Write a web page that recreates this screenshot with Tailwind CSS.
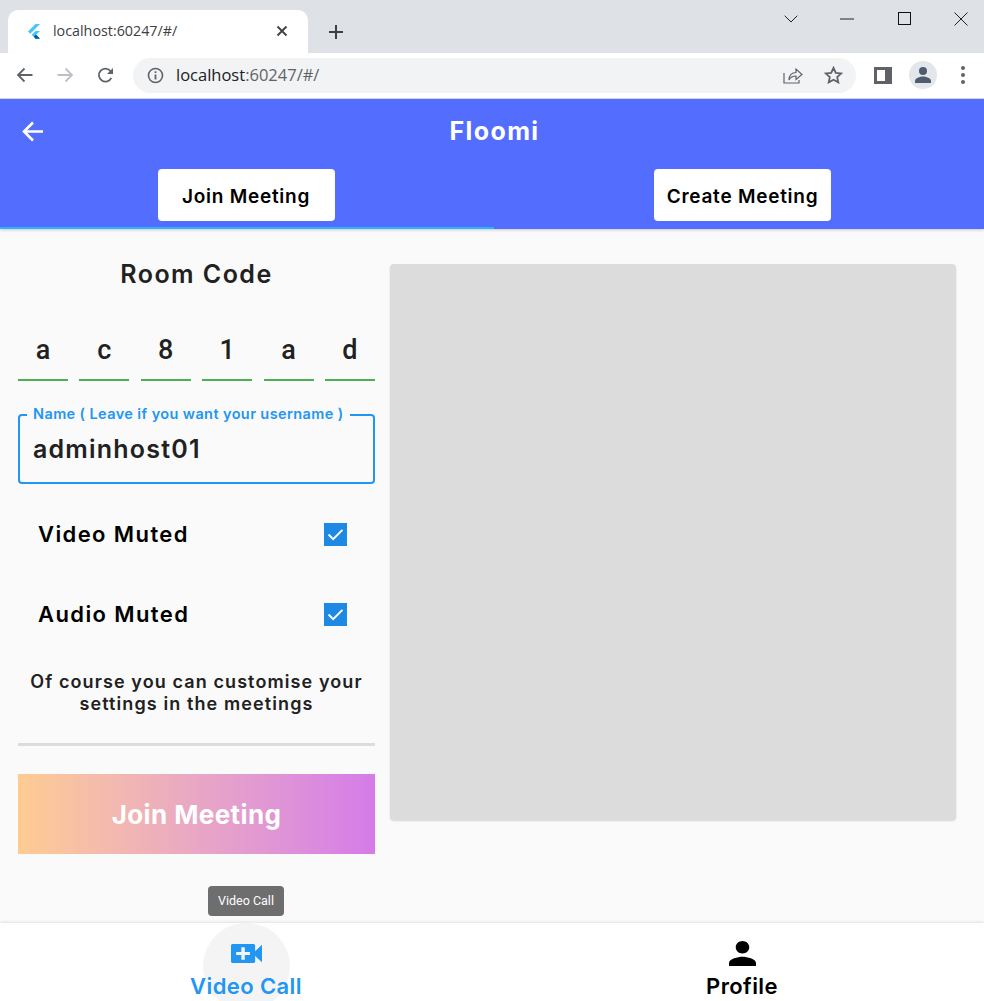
<!DOCTYPE html>
<html lang="en">
<head>
    <meta charset="UTF-8">
    <meta name="viewport" content="width=device-width, initial-scale=1.0">
    <title>Floomi</title>
    <script src="https://cdn.jsdelivr.net/npm/@tailwindcss/browser@4"></script>
</head>
<body class="m-0 bg-[#fafafa] font-['Inter',sans-serif]">
<div class="relative w-[984px] h-[1001px] overflow-hidden flex flex-col">

    <!-- Browser tab strip -->
    <div class="h-[53px] shrink-0 bg-[#dee1e6] flex items-end pl-2">
        <div class="w-[300px] h-[43px] bg-white rounded-t-[10px] flex items-center pl-[18px] pr-[20px] pb-[1px]">
            <svg class="w-4 h-4 shrink-0" viewBox="0 0 16 16"><path fill="#47c5fb" d="M9.5 1 2 8.5l2.3 2.3L14 1z"/><path fill="#47c5fb" d="M9.5 7.9 5.6 11.8 9.5 15.7H14l-3.9-3.9L14 7.9z"/><path fill="#00569e" d="M7.9 13.4 9.9 11.6 14 15.7H9.5z"/></svg>
            <span class="ml-[11px] text-[14.3px] text-[#3c4043] font-['Open_Sans',sans-serif]">localhost:60247/#/</span>
            <svg class="ml-auto w-3 h-3" viewBox="0 0 12 12"><path d="M1.5 1.5l9 9M10.5 1.5l-9 9" stroke="#3c4043" stroke-width="1.8" fill="none"/></svg>
        </div>
        <svg class="ml-[20px] mb-[13px] w-4 h-4" viewBox="0 0 16 16"><path d="M8 1v14M1 8h14" stroke="#3c4043" stroke-width="2" fill="none"/></svg>
        <div class="ml-auto self-start flex items-center h-[37px]">
            <svg class="w-[14px] h-2" viewBox="0 0 14 8"><path d="M.7.7 7 7l6.3-6.3" stroke="#222" fill="none"/></svg>
            <svg class="ml-[42px] w-[14px] h-[2px]" viewBox="0 0 14 2"><path d="M0 1h14" stroke="#222"/></svg>
            <div class="ml-[44px] w-[13px] h-[13px] border border-[#111]"></div>
            <svg class="ml-[43px] mr-[16px] w-[14px] h-[14px]" viewBox="0 0 14 14"><path d="M.5.5l13 13M13.5.5l-13 13" stroke="#222" fill="none"/></svg>
        </div>
    </div>

    <!-- Browser toolbar -->
    <div class="h-[46px] shrink-0 bg-white border-b border-[#dadce0] flex items-center pb-[1px]">
        <svg class="ml-[16px] w-[17px] h-[16px]" viewBox="0 0 17 16"><path d="M16.5 8H2M8.500 1.500 2 8l6.500 6.500" stroke="#5f6368" stroke-width="1.800" fill="none"/></svg>
        <svg class="ml-[24px] w-[17px] h-[16px]" viewBox="0 0 17 16"><path d="M.5 8H15M8.500 1.500 15 8l-6.500 6.500" stroke="#bdc1c6" stroke-width="1.800" fill="none"/></svg>
        <svg class="ml-[23px] w-[17px] h-[17px]" viewBox="0 0 17 17"><path d="M14.300 10.800A6.500 6.500 0 1 1 13.300 3.800L15 5.500" stroke="#5f6368" stroke-width="1.800" fill="none"/><path d="M16 1v6h-6z" fill="#5f6368"/></svg>
        <div class="ml-[19px] w-[723px] h-[35px] rounded-full bg-[#f1f3f4] flex items-center pl-[14px] pr-[14px]">
            <svg class="w-[17px] h-[17px]" viewBox="0 0 17 17"><circle cx="8.500" cy="8.500" r="7" stroke="#5f6368" stroke-width="1.600" fill="none"/><path d="M8.500 7.500v5M8.500 4.300v1.800" stroke="#5f6368" stroke-width="1.800"/></svg>
            <span class="ml-[12px] text-[16.5px] text-[#5f6368] font-['Open_Sans',sans-serif]"><span class="text-[#202124]">localhost</span>:60247/#/</span>
            <svg class="ml-auto mr-[21px] w-[20px] h-[18px]" viewBox="0 0 20 18"><path d="M1 7v10h15v-3" stroke="#5f6368" stroke-width="1.200" fill="none"/><path d="M6 14c0-5 3-7.500 7-7.500V3l6 5.500-6 5V10c-3 0-5.500 1-7 4z" stroke="#5f6368" stroke-width="1.200" fill="none"/></svg>
            <svg class="mr-[-1px] w-[19px] h-[18px]" viewBox="0 0 19 18"><path d="M9.500 1.800l2.300 5 5.400.6-4 3.700 1.100 5.300-4.800-2.700-4.800 2.700 1.100-5.300-4-3.700 5.400-.6z" stroke="#5f6368" stroke-width="1.800" fill="none"/></svg>
        </div>
        <div class="ml-[18px] w-[18px] h-[17px] border-[3px] border-r-[7px] border-[#5f6368]"></div>
        <div class="ml-[17px] w-[28px] h-[28px] rounded-full bg-[#e3e6ea] flex items-center justify-center">
            <svg class="w-[18px] h-[18px]" viewBox="0 0 18 18"><circle cx="9" cy="5" r="4" fill="#4f5b6e"/><path d="M1 17v-2c0-3 5-4.500 8-4.500s8 1.500 8 4.500v2z" fill="#4f5b6e"/></svg>
        </div>
        <div class="ml-[24px] flex flex-col gap-[3px]">
            <span class="w-1 h-1 rounded-full bg-[#5f6368]"></span>
            <span class="w-1 h-1 rounded-full bg-[#5f6368]"></span>
            <span class="w-1 h-1 rounded-full bg-[#5f6368]"></span>
        </div>
    </div>

    <!-- App bar -->
    <header class="relative h-[130px] shrink-0 bg-[#536dfe] shadow-[0_1px_3px_rgba(0,0,0,0.2)] z-10">
        <div class="relative h-[66px] flex items-center justify-center pl-[5px]">
            <svg class="absolute left-[22px] top-[22px] w-[21px] h-[21px]" viewBox="0 0 21 21"><path d="M21 10.500H2.500M11 1.500l-9 9 9 9" stroke="#fff" stroke-width="2.600" fill="none"/></svg>
            <h1 class="text-[25px] font-bold text-white tracking-[1.4px]">Floomi</h1>
        </div>
        <div class="flex h-[64px]">
            <div class="w-[494px] pr-[2px] flex justify-center border-b-[2px] border-[#29b6f6]">
                <button class="mt-[4px] w-[177px] h-[52px] pt-[4px] bg-white rounded-[4px] text-[19px] font-semibold text-black tracking-[0.75px]">Join Meeting</button>
            </div>
            <div class="w-[490px] pl-[7px] flex justify-center">
                <button class="mt-[4px] w-[177px] h-[52px] pt-[4px] bg-white rounded-[4px] text-[19px] font-semibold text-black tracking-[0.75px] whitespace-nowrap">Create Meeting</button>
            </div>
        </div>
    </header>

    <!-- Page body -->
    <main class="flex-1 flex pl-[18px] min-h-0">
        <section class="w-[357px] shrink-0 flex flex-col">
            <h2 class="mt-[29px] h-[32px] leading-[32px] text-center text-[25px] font-semibold text-[#212121] tracking-[1.45px]">Room Code</h2>

            <div class="mt-[26px] flex justify-between font-['Roboto',sans-serif] text-[27px] font-medium text-[#212121] text-center">
                <div class="w-[50px] h-[65px] leading-[68px] border-b-[2px] border-[#4caf50]">a</div>
                <div class="w-[50px] h-[65px] leading-[68px] border-b-[2px] border-[#4caf50]">c</div>
                <div class="w-[50px] h-[65px] leading-[68px] border-b-[2px] border-[#4caf50]">8</div>
                <div class="w-[50px] h-[65px] leading-[68px] border-b-[2px] border-[#4caf50]">1</div>
                <div class="w-[50px] h-[65px] leading-[68px] border-b-[2px] border-[#4caf50]">a</div>
                <div class="w-[50px] h-[65px] leading-[68px] border-b-[2px] border-[#4caf50]">d</div>
            </div>

            <div class="relative mt-[33px] h-[70px] border-2 border-[#2196f3] rounded-[4px] pl-[13px] flex items-center">
                <span class="absolute left-[7px] top-[-11px] px-[6px] bg-[#fafafa] text-[14.5px] leading-[17px] font-semibold text-[#2196f3] tracking-[0.4px] whitespace-nowrap">Name ( Leave if you want your username )</span>
                <span class="text-[25px] font-semibold text-[#212121] tracking-[1.2px] pt-[1px]">adminhost01</span>
            </div>

            <div class="mt-[31px] h-[40px] pl-[20px] pr-[28px] flex items-center justify-between">
                <span class="-mt-[2px] text-[22px] font-semibold text-black tracking-[1.4px]">Video Muted</span>
                <div class="-mt-[2px] w-[23px] h-[23px] bg-[#1e88e5] flex items-center justify-center">
                    <svg class="w-[17px] h-[13px]" viewBox="0 0 18 14"><path d="M1.500 7l5 5L16.500 2" stroke="#fff" stroke-width="2.200" fill="none"/></svg>
                </div>
            </div>
            <div class="mt-[40px] h-[40px] pl-[20px] pr-[28px] flex items-center justify-between">
                <span class="-mt-[2px] text-[22px] font-semibold text-black tracking-[1.4px]">Audio Muted</span>
                <div class="-mt-[2px] w-[23px] h-[23px] bg-[#1e88e5] flex items-center justify-center">
                    <svg class="w-[17px] h-[13px]" viewBox="0 0 18 14"><path d="M1.500 7l5 5L16.500 2" stroke="#fff" stroke-width="2.200" fill="none"/></svg>
                </div>
            </div>

            <p class="mt-[36px] text-center text-[18px] leading-[22px] font-semibold text-[#212121] tracking-[1.1px] whitespace-nowrap">Of course you can customise your<br>settings in the meetings</p>

            <div class="mt-[28px] h-[3px] bg-[#dcdcdc]"></div>

            <button class="mt-[28px] h-[80px] bg-gradient-to-r from-[#fecc92] to-[#d57be9] text-white text-[26px] font-bold tracking-[0.4px]">Join Meeting</button>
        </section>

        <section class="ml-[15px] mt-[35px] w-[566px] h-[556px] bg-[#dcdcdc] rounded-[4px] shadow-[0_1px_2px_rgba(0,0,0,0.15)]"></section>
    </main>

    <!-- Tooltip -->
    <div class="absolute left-[208px] top-[886px] w-[76px] h-[30px] rounded-[4px] bg-[#6e6e6e] text-white text-[12.5px] font-['Roboto',sans-serif] flex items-center justify-center z-20">Video Call</div>

    <!-- Bottom navigation -->
    <nav class="relative h-[78px] shrink-0 bg-white flex overflow-hidden shadow-[0_-1px_3px_rgba(0,0,0,0.1)]">
        <div class="relative w-[492px] flex flex-col items-center pt-[21px]">
            <div class="absolute left-[203px] top-0 w-[87px] h-[87px] rounded-full bg-[#f4f4f4]"></div>
            <svg class="relative w-[31px] h-[20px]" viewBox="3 6 18 12" preserveAspectRatio="none"><path fill="#2196f3" d="M17 10.500V7c0-.55-.45-1-1-1H4c-.55 0-1 .45-1 1v10c0 .55.45 1 1 1h12c.55 0 1-.45 1-1v-3.500l4 4v-11l-4 4zM14 13h-3v3H9v-3H6v-2h3V8h2v3h3v2z"/></svg>
            <span class="relative mt-[8px] text-[22px] leading-[30px] font-semibold text-[#2196f3] tracking-[0.4px]">Video Call</span>
        </div>
        <div class="w-[492px] pl-[8px] flex flex-col items-center pt-[18px]">
            <svg class="w-[27px] h-[26px]" viewBox="4 4 16 16" preserveAspectRatio="none"><path fill="#000" d="M12 12c2.210 0 4-1.790 4-4s-1.790-4-4-4-4 1.790-4 4 1.790 4 4 4zm0 2c-2.670 0-8 1.340-8 4v2h16v-2c0-2.660-5.330-4-8-4z"/></svg>
            <span class="mt-[5px] text-[22px] leading-[30px] font-semibold text-black tracking-[0.4px]">Profile</span>
        </div>
    </nav>
</div>
</body>
</html>
